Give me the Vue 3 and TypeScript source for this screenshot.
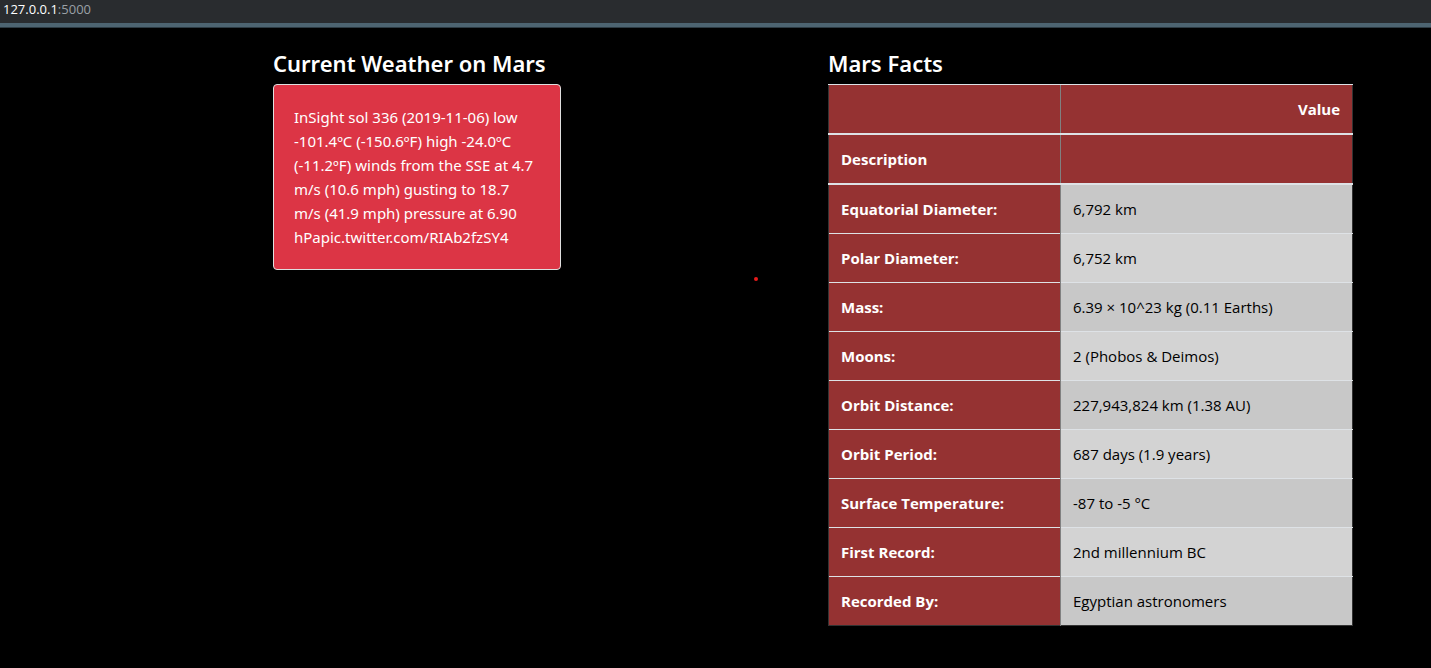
<script setup lang="ts">
interface Fact {
  label: string
  value: string
}

const address = { host: '127.0.0.1', port: ':5000' }

const weather: string =
  'InSight sol 336 (2019-11-06) low -101.4ºC (-150.6ºF) high -24.0ºC (-11.2ºF) winds from the SSE at 4.7 m/s (10.6 mph) gusting to 18.7 m/s (41.9 mph) pressure at 6.90 hPapic.twitter.com/RIAb2fzSY4'

const facts: Fact[] = [
  { label: 'Equatorial Diameter:', value: '6,792 km' },
  { label: 'Polar Diameter:', value: '6,752 km' },
  { label: 'Mass:', value: '6.39 × 10^23 kg (0.11 Earths)' },
  { label: 'Moons:', value: '2 (Phobos & Deimos)' },
  { label: 'Orbit Distance:', value: '227,943,824 km (1.38 AU)' },
  { label: 'Orbit Period:', value: '687 days (1.9 years)' },
  { label: 'Surface Temperature:', value: '-87 to -5 °C' },
  { label: 'First Record:', value: '2nd millennium BC' },
  { label: 'Recorded By:', value: 'Egyptian astronomers' },
]
</script>

<template>
  <div class="page">
    <header class="address-bar">
      <a class="address" href="#">{{ address.host }}<span class="port">{{ address.port }}</span></a>
    </header>

    <main class="content">
      <section class="weather">
        <h1 class="title">Current Weather on Mars</h1>
        <p class="card">{{ weather }}</p>
      </section>

      <section class="facts">
        <h2 id="facts-title" class="title">Mars Facts</h2>
        <table class="facts-table" aria-labelledby="facts-title">
          <thead>
            <tr>
              <th class="label-col"></th>
              <th class="value-head" scope="col">Value</th>
            </tr>
            <tr>
              <th scope="col">Description</th>
              <th></th>
            </tr>
          </thead>
          <tbody>
            <tr v-for="fact in facts" :key="fact.label">
              <th scope="row">{{ fact.label }}</th>
              <td>{{ fact.value }}</td>
            </tr>
          </tbody>
        </table>
      </section>

      <span class="dot" aria-hidden="true"></span>
    </main>
  </div>
</template>

<style>
body {
  margin: 0;
  background: #000;
}
</style>

<style scoped>
.page {
  min-height: 100vh;
  background: #000;
  color: #fff;
  font-family: "Open Sans", "Noto Sans", sans-serif;
  font-size: 15px;
  line-height: 24px;
}

.address-bar {
  display: flex;
  height: 23px;
  padding-left: 3px;
  background: #292c2f;
  border-bottom: 4px solid #4d6471;
  box-shadow: 0 1px 0 #2d3b43;
}

.address {
  color: #fff;
  font-size: 13px;
  line-height: 18px;
  text-decoration: none;
}

.port {
  color: #9aa0a6;
}

.content {
  position: relative;
  display: grid;
  grid-template-columns:
    minmax(0, 273fr) minmax(0, 288fr) minmax(0, 267fr)
    minmax(0, 525fr) minmax(0, 78fr);
  align-items: start;
  padding: 21px 0 40px;
}

.weather {
  grid-column: 2;
}

.facts {
  grid-column: 4;
}

.title {
  margin: 0 0 6px;
  font-family: "Noto Sans", "Open Sans", sans-serif;
  font-size: 22px;
  font-weight: 600;
  line-height: 30px;
  white-space: nowrap;
}

.card {
  margin: 0;
  padding: 20px 24px 20px 20px;
  background: #dc3545;
  border: 1px solid #dfdfdf;
  border-radius: 4px;
  font-family: "Noto Sans", "Open Sans", sans-serif;
}

.facts-table {
  width: 100%;
  table-layout: fixed;
  border-collapse: collapse;
  border: 1px solid #333;
  color: #000;
}

.facts-table th,
.facts-table td {
  height: 24px;
  padding: 12px;
  border-top: 1px solid #dee2e6;
  border-left: 1px solid #808080;
  text-align: left;
}

.facts-table th:first-child {
  border-left-color: #333;
}

.facts-table th {
  background: #953232;
  color: #fff;
  font-weight: 700;
}

.facts-table thead th {
  border-bottom: 2px solid #dee2e6;
}

.facts-table .label-col {
  width: 207px;
}

.facts-table .value-head {
  text-align: right;
}

.facts-table td {
  background: #d3d3d3;
}

.facts-table tbody tr:nth-child(odd) td {
  background: #c8c8c8;
}

.dot {
  position: absolute;
  top: 250px;
  left: 52.7%;
  width: 4px;
  height: 4px;
  border-radius: 50%;
  background: #e81b1b;
}
</style>
